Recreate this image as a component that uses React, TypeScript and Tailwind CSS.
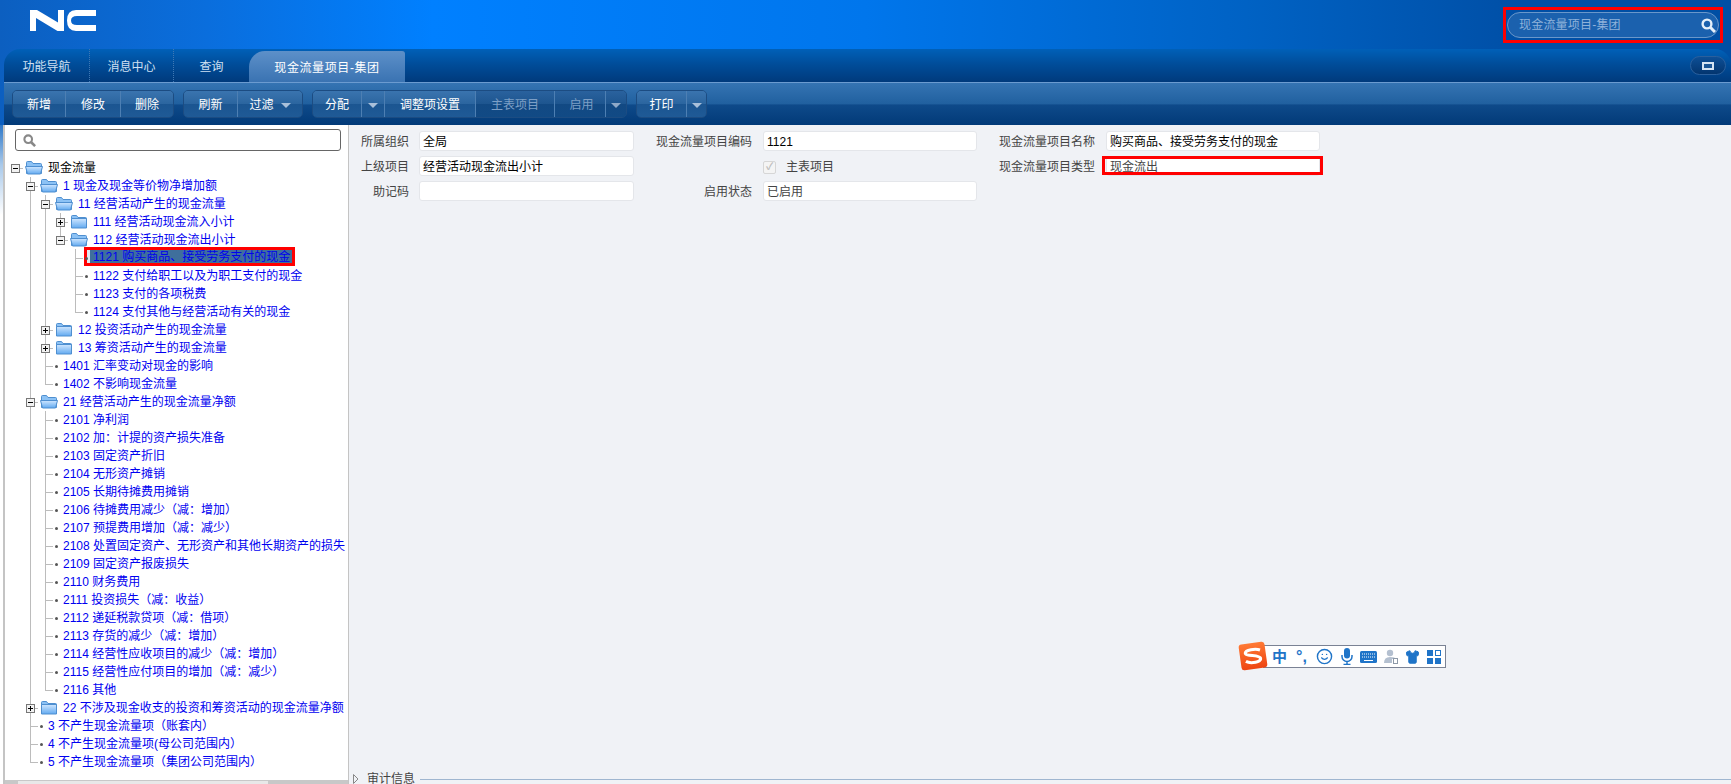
import React, { useId } from "react";
import { Smile, Shirt } from "lucide-react";

type TreeItem = {
  label: string;
  open?: boolean;
  folder?: boolean;
  selected?: boolean;
  black?: boolean;
  children?: TreeItem[];
};

const leaf = (label: string, selected = false): TreeItem => ({ label, selected });

const treeData: TreeItem = {
  label: "现金流量",
  folder: true,
  open: true,
  black: true,
  children: [
    {
      label: "1 现金及现金等价物净增加额",
      folder: true,
      open: true,
      children: [
        {
          label: "11 经营活动产生的现金流量",
          folder: true,
          open: true,
          children: [
            { label: "111 经营活动现金流入小计", folder: true },
            {
              label: "112 经营活动现金流出小计",
              folder: true,
              open: true,
              children: [
                leaf("1121 购买商品、接受劳务支付的现金", true),
                leaf("1122 支付给职工以及为职工支付的现金"),
                leaf("1123 支付的各项税费"),
                leaf("1124 支付其他与经营活动有关的现金"),
              ],
            },
          ],
        },
        { label: "12 投资活动产生的现金流量", folder: true },
        { label: "13 筹资活动产生的现金流量", folder: true },
        leaf("1401 汇率变动对现金的影响"),
        leaf("1402 不影响现金流量"),
      ],
    },
    {
      label: "21 经营活动产生的现金流量净额",
      folder: true,
      open: true,
      children: [
        "2101 净利润",
        "2102 加：计提的资产损失准备",
        "2103 固定资产折旧",
        "2104 无形资产摊销",
        "2105 长期待摊费用摊销",
        "2106 待摊费用减少（减：增加）",
        "2107 预提费用增加（减：减少）",
        "2108 处置固定资产、无形资产和其他长期资产的损失",
        "2109 固定资产报废损失",
        "2110 财务费用",
        "2111 投资损失（减：收益）",
        "2112 递延税款贷项（减：借项）",
        "2113 存货的减少（减：增加）",
        "2114 经营性应收项目的减少（减：增加）",
        "2115 经营性应付项目的增加（减：减少）",
        "2116 其他",
      ].map((t) => leaf(t)),
    },
    { label: "22 不涉及现金收支的投资和筹资活动的现金流量净额", folder: true },
    leaf("3 不产生现金流量项（账套内）"),
    leaf("4 不产生现金流量项(母公司范围内）"),
    leaf("5 不产生现金流量项（集团公司范围内）"),
  ],
};

const SearchGlyph = ({ className }: { className?: string }) => (
  <svg className={className} viewBox="0 0 15 15" fill="none" stroke="currentColor">
    <circle cx="6" cy="6" r="4.4" strokeWidth="2.4" />
    <path d="M9.500 9.500L14 14" strokeWidth="3" />
  </svg>
);

const FolderIcon = ({ open }: { open?: boolean }) => {
  const id = useId();
  return (
    <svg width="18" height="15" viewBox="0 0 18 15" className="block">
      <defs>
        <linearGradient id={id} x1="0" y1="0" x2="0" y2="1">
          <stop offset="0" stopColor="#cfe6ff" />
          <stop offset="1" stopColor="#62aaf0" />
        </linearGradient>
      </defs>
      <path d="M1.5 13.5V2.5q0-1 1-1h4l1.5 2h7.5q1 0 1 1v9z" fill="#8cc2f5" stroke="#4f8fd0" />
      {open ? (
        <path d="M0.5 6.5h17l-2 7.5h-13z" fill={`url(#${id})`} stroke="#4f8fd0" />
      ) : (
        <path d="M1.5 4.5h15v9.5h-15z" fill={`url(#${id})`} stroke="#4f8fd0" />
      )}
    </svg>
  );
};

const ExpandBox = ({ open }: { open?: boolean }) => (
  <span className="absolute -left-[4px] top-[5px] z-10 flex h-[9px] w-[9px] items-center justify-center border border-[#777] bg-[#f2f2f2]">
    <span className="absolute h-px w-[5px] bg-black" />
    {!open && <span className="absolute h-[5px] w-px bg-black" />}
  </span>
);

const TreeRow = ({
  item,
  depth,
  guides,
  last,
}: {
  item: TreeItem;
  depth: number;
  guides: boolean[];
  last: boolean;
}) => {
  const color = item.black ? "text-black" : "text-[#0000f0]";
  return (
    <>
      <div className="flex h-[18px] items-center pl-[10px] text-[12px] whitespace-nowrap">
        {guides.map((on, i) => (
          <span key={i} className={`h-full w-[15px] shrink-0 ${on ? "border-l border-[#bcbcbc]" : ""}`} />
        ))}
        <span className={`relative h-full shrink-0 ${item.folder ? "w-[33px]" : "w-[18px]"}`}>
          {depth > 0 && (
            <span className={`absolute left-0 top-0 w-px bg-[#bcbcbc] ${last ? "h-[9px]" : "h-full"}`} />
          )}
          <span className="absolute left-0 top-[9px] h-px w-[8px] bg-[#bcbcbc]" />
          {item.folder ? (
            <>
              <ExpandBox open={item.open} />
              <span className="absolute left-[10px] top-[1px]">
                <FolderIcon open={item.open} />
              </span>
            </>
          ) : (
            <span className="absolute left-[10px] top-[8px] h-[3px] w-[3px] rounded-full bg-[#555]" />
          )}
        </span>
        {item.selected ? (
          <span className={`-ml-[6px] -mt-[3px] flex h-[13px] items-center border-l-[3px] border-[#dfe8f0] bg-[#3f6f9c] pl-[3px] pr-[2px] outline-[3px] outline-[#f00] ${color}`}>
            {item.label}
          </span>
        ) : (
          <span className={color}>{item.label}</span>
        )}
      </div>
      {item.open &&
        item.children?.map((child, i) => (
          <TreeRow
            key={child.label}
            item={child}
            depth={depth + 1}
            guides={[...guides, depth > 0 && !last]}
            last={i === item.children!.length - 1}
          />
        ))}
    </>
  );
};

type ToolBtn = { text?: string; w: string; arrow?: boolean; off?: boolean; hasArrow?: boolean };

const Caret = ({ dim }: { dim?: boolean }) => (
  <span className={`h-0 w-0 border-x-[5px] border-t-[5px] border-x-transparent ${dim ? "border-t-[#8fa9c8]" : "border-t-[#a9c0da]"}`} />
);

const ToolGroup = ({ buttons, w }: { buttons: ToolBtn[]; w: string }) => (
  <div className={`flex h-[28px] shrink-0 overflow-hidden rounded-[5px] border border-[#1c4c82] ${w}`}>
    {buttons.map((b, i) => (
      <div
        key={i}
        className={`flex items-center justify-center gap-[7px] pt-[2px] text-[12px] ${b.w} ${i > 0 ? "border-l border-[#4d7fb3]" : ""} ${
          b.off
            ? "bg-[linear-gradient(#2a629e,#1d558f_50%,#124983_50%,#114a85)] text-[#7d9fc6]"
            : "bg-[linear-gradient(#3a74af,#2b659f_50%,#1b5591_50%,#1f5a96)] text-white"
        }`}
      >
        {b.text}
        {b.hasArrow && <Caret />}
        {b.arrow && <Caret dim={b.off} />}
      </div>
    ))}
  </div>
);

const Field = ({ text, dim, boxed }: { text?: string; dim?: boolean; boxed?: boolean }) => (
  <div className={`relative flex h-[20px] items-center rounded-[3px] border border-[#e4e6ea] bg-white pl-[3px] pt-[2px] text-[12px] ${dim ? "text-[#444]" : "text-black"}`}>
    {text}
    {boxed && <span className="absolute -left-[5px] -right-[4px] -top-[1px] bottom-[0px] border-[3px] border-[#f00]" />}
  </div>
);

const Label = ({ text, pr = "pr-[11px]" }: { text?: string; pr?: string }) => (
  <div className={`flex h-[20px] items-center justify-end pt-[2px] text-[12px] text-[#444] ${pr}`}>{text}</div>
);

const ImeBar = () => (
  <div className="absolute left-[891px] top-[518px] flex items-center">
    <div className="z-10 flex h-[26px] w-[26px] -rotate-[8deg] items-center justify-center rounded-[3px] bg-[linear-gradient(#ff7a35,#ee4512)]">
      <svg width="20" height="18" viewBox="0 0 18 16">
        <path d="M16 3.5C12 1.5 3 1.5 2.5 4.5S15 7.5 15.5 11S6 15 2 12" fill="none" stroke="#fff" strokeWidth="2.8" />
      </svg>
    </div>
    <div className="-ml-[3px] mt-[1px] flex h-[23px] w-[183px] items-center border border-[#7a8294] border-l-0 bg-white pl-[9px] text-[#1f74c8]">
      <span className="w-[14px] text-[15px] leading-none font-bold">中</span>
      <span className="ml-[10px] w-[12px] text-[16px] leading-none font-bold">°,</span>
      <Smile className="ml-[8px] h-[17px] w-[17px]" strokeWidth={2} />
      <svg className="ml-[8px]" width="12" height="17" viewBox="0 0 12 17" fill="none" stroke="#1f74c8">
        <rect x="3" y="0" width="6" height="10.500" rx="3" fill="#1f74c8" stroke="none" />
        <path d="M1 7v1.500a5 5 0 0 0 10 0V7M6 13.500v2.500M2.500 16.500h7" strokeWidth="1.500" />
      </svg>
      <svg className="ml-[7px]" width="17" height="12" viewBox="0 0 17 12">
        <rect width="17" height="12" rx="1.5" fill="#1f74c8" />
        <path d="M2 3h13M2 6h13" stroke="#fff" strokeDasharray="1 1" />
        <path d="M4 9.5h9" stroke="#fff" />
      </svg>
      <svg className="ml-[7px]" width="14" height="15" viewBox="0 0 14 15">
        <circle cx="6" cy="4" r="3.2" fill="#b4c0d0" />
        <path d="M0 14q0-6 6-6t5 2H8v4z" fill="#b4c0d0" />
        <rect x="9.5" y="9.5" width="4" height="5" fill="#fff" stroke="#8d99a8" />
      </svg>
      <Shirt className="ml-[7px] h-[16px] w-[15px]" fill="#1f74c8" strokeWidth={1.5} />
      <svg className="ml-[7px]" width="14" height="14" viewBox="0 0 14 14">
        <rect width="6" height="6" fill="#1f74c8" />
        <rect x="8.5" y="0.5" width="5" height="5" fill="none" stroke="#1f74c8" />
        <rect y="8" width="6" height="6" fill="#1f74c8" />
        <rect x="8" y="8" width="6" height="6" fill="#1f74c8" />
      </svg>
    </div>
  </div>
);

const App = () => {
  return (
    <div className="flex h-[784px] w-[1731px] flex-col overflow-hidden bg-[linear-gradient(90deg,#0c5fc0,#0a6edd_12%,#0080ff_25%,#0076ec_50%,#0062c4_72%,#004fa6_88%,#004fa4)] font-['Liberation_Sans','Noto_Sans_CJK_SC',sans-serif]">
      {/* top bar */}
      <div className="flex h-[49px] shrink-0 items-start justify-between pl-[30px] pr-[8px]">
        <svg className="mt-[10px]" width="66" height="21" viewBox="0 0 66 21">
          <path d="M0 21V0h7l21 12.5V0h6v21h-6.500L6 8v13z" fill="#fff" />
          <path d="M66 0v6H47q-6 0-6 4.500T47 15h19v6H46Q37 21 37 10.500T46 0z" fill="#fff" />
        </svg>
        <div className="mt-[7px] flex h-[36px] w-[220px] items-center border-[3px] border-[#f00] p-[1px]">
          <div className="flex h-[26px] w-full items-center justify-between rounded-full border border-[#6a97ca] bg-[#1b61ae] pl-[11px] pr-[2px] text-[12px] tracking-[0.2px] text-[#8fb2da]">
            现金流量项目-集团
            <SearchGlyph className="h-[15px] w-[15px] text-[#e6f0fa]" />
          </div>
        </div>
      </div>

      {/* tabs */}
      <div className="ml-[4px] flex h-[33px] shrink-0 items-end justify-between rounded-t-[16px] bg-[linear-gradient(#0060b8,#004d9a_45%,#003a7c)] pr-[5px] text-[12px]">
        <div className="flex h-full items-end">
          <div className="flex h-full w-[85px] items-center justify-center pt-[2px] text-[#cfe0f2]">功能导航</div>
          <div className="flex h-full w-[84px] items-center justify-center border-l border-dotted border-[#3f78b4] pt-[2px] text-[#cfe0f2]">消息中心</div>
          <div className="flex h-full w-[76px] items-center justify-center border-l border-dotted border-[#3f78b4] pt-[2px] text-[#cfe0f2]">查询</div>
          <div className="flex h-[31px] w-[156px] items-center justify-center rounded-tl-[16px] rounded-tr-[3px] bg-[linear-gradient(#5d90c9,#3a73b2)] pt-[2px] tracking-[0.6px] text-white">现金流量项目-集团</div>
        </div>
        <div className="mb-[7px] flex h-[19px] w-[36px] items-center justify-center rounded-full border border-[#2a5f9c] bg-[linear-gradient(#0d4f96,#03356f)]">
          <span className="h-[8px] w-[12px] border-2 border-x-[2px] border-[#d5e4f3] bg-[#1a5696]" />
        </div>
      </div>

      {/* toolbar */}
      <div className="ml-[4px] flex h-[43px] shrink-0 items-center gap-[9px] border-t border-[#6b9bd0] bg-[linear-gradient(#3574b3,#20609f_50%,#0e4a8a_52%,#023a78)] pl-[8px]">
        <ToolGroup
          w="w-[162px]"
          buttons={[
            { text: "新增", w: "w-[52px]" },
            { text: "修改", w: "w-[55px]" },
            { text: "删除", w: "flex-1" },
          ]}
        />
        <ToolGroup
          w="w-[120px]"
          buttons={[
            { text: "刷新", w: "w-[53px]" },
            { text: "过滤", w: "flex-1", hasArrow: true },
          ]}
        />
        <ToolGroup
          w="w-[315px]"
          buttons={[
            { text: "分配", w: "w-[48px]" },
            { w: "w-[23px]", arrow: true },
            { text: "调整项设置", w: "w-[91px]" },
            { text: "主表项目", w: "w-[79px]", off: true },
            { text: "启用", w: "w-[51px] pl-[3px]", off: true },
            { w: "flex-1", arrow: true, off: true },
          ]}
        />
        <ToolGroup
          w="w-[71px]"
          buttons={[
            { text: "打印", w: "w-[49px]" },
            { w: "flex-1", arrow: true },
          ]}
        />
      </div>

      {/* body */}
      <div className="flex min-h-0 flex-1">
        <div className="w-[3px] shrink-0 bg-[linear-gradient(#2f78c8,#a9c9ea_40px,#fff_90px)]" />
        <div className="flex w-[346px] shrink-0 flex-col border-x-2 border-r border-x-[#c4c4c4] bg-white">
          <div className="ml-[10px] mr-[7px] mt-[4px] flex h-[22px] shrink-0 items-center rounded-[3px] border border-[#666] bg-white pl-[7px]">
            <SearchGlyph className="h-[13px] w-[13px] text-[#888]" />
          </div>
          <div className="mt-[8px] min-h-0 flex-1 overflow-hidden">
            <TreeRow item={treeData} depth={0} guides={[]} last />
          </div>
          <div className="flex h-[4px] shrink-0 bg-[#c8c8c8] pl-[13px]">
            <div className="mt-[1px] w-[250px] bg-[#e8e8e8]" />
          </div>
        </div>

        <div className="relative flex min-w-0 flex-1 flex-col bg-[#f0f2f6]">
          <div className="grid grid-cols-[70px_215px_129px_214px_129px_214px] gap-y-[5px] pt-[6px]">
            <Label text="所属组织" pr="pr-[10px]" />
            <Field text="全局" />
            <Label text="现金流量项目编码" />
            <Field text="1121" />
            <Label text="现金流量项目名称" />
            <Field text="购买商品、接受劳务支付的现金" />

            <Label text="上级项目" pr="pr-[10px]" />
            <Field text="经营活动现金流出小计" />
            <Label />
            <div className="flex h-[20px] items-center gap-[10px] pt-[2px] text-[12px] text-[#444]">
              <span className="flex h-[13px] w-[13px] items-center justify-center rounded-[2px] border border-[#d6d6d6] bg-[#f4f4f4] text-[10px] leading-none font-bold text-[#bdbdbd]">
                ✓
              </span>
              主表项目
            </div>
            <Label text="现金流量项目类型" />
            <Field text="现金流出" dim boxed />

            <Label text="助记码" pr="pr-[10px]" />
            <Field />
            <Label text="启用状态" />
            <Field text="已启用" dim />
          </div>

          <ImeBar />

          <div className="mt-auto -mb-[4px] flex h-[18px] shrink-0 items-center pl-[4px] text-[12px] text-[#444]">
            <svg width="6" height="10" viewBox="0 0 6 10">
              <path d="M0.5 0.500L5 5L0.500 9.500z" fill="#f0f2f6" stroke="#888" />
            </svg>
            <span className="ml-[8px]">审计信息</span>
            <span className="ml-[5px] h-px flex-1 bg-[#9fb6d0]" />
          </div>
        </div>
      </div>
    </div>
  );
};

export default App;
